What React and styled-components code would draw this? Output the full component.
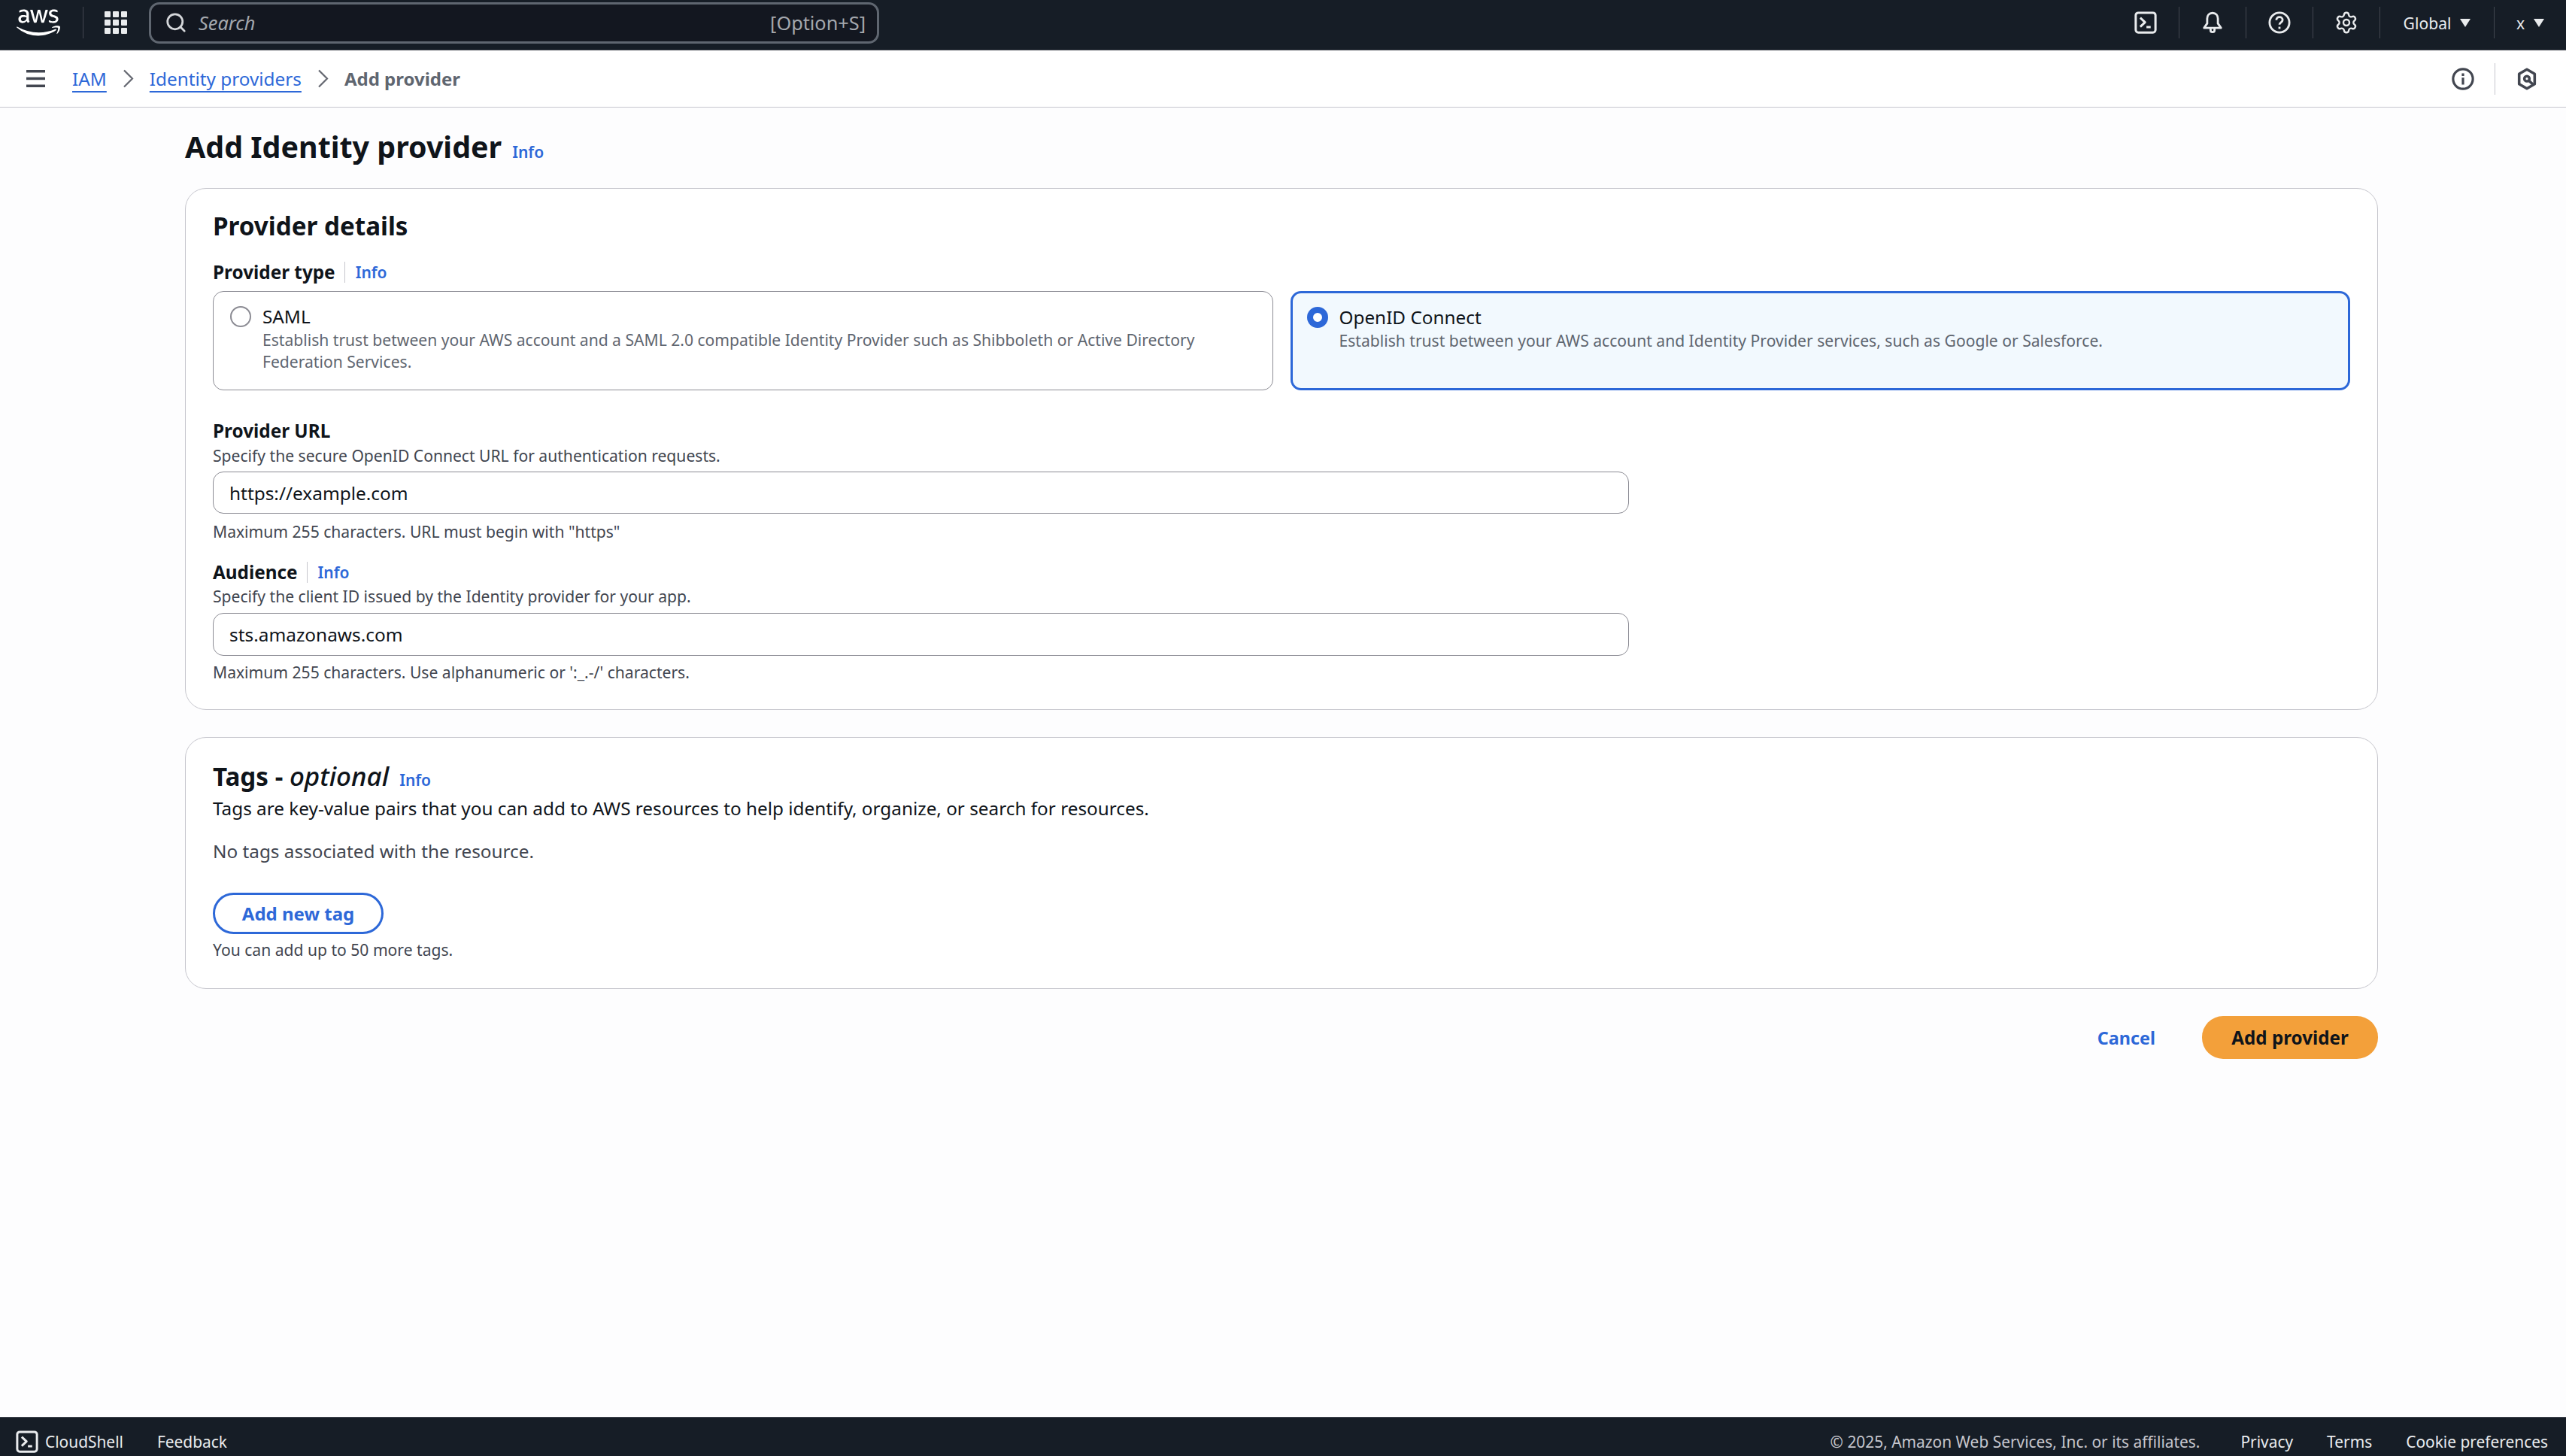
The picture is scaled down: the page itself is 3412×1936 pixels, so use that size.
import React from "react";
import styled, { createGlobalStyle } from "styled-components";
import { FaAws } from "react-icons/fa";
import { Search, Settings } from "lucide-react";

const GlobalStyle = createGlobalStyle`
  html, body { margin: 0; padding: 0; background: #fdfdfe; }
  body { font-family: "Noto Sans", "Open Sans", sans-serif; color: #0f141a; }
  * { box-sizing: border-box; }
`;

const Page = styled.div`
  height: 1936px;
  display: flex;
  flex-direction: column;
  overflow: hidden;
`;

// top bar
const TopBar = styled.header`
  height: 67px;
  flex: none;
  display: flex;
  align-items: center;
  padding-bottom: 6px;
  background: #161d26;
  border-bottom: 1px solid #424650;
  color: #fff;
`;
const Logo = styled.div`
  width: 110px;
  padding-left: 22px;
  display: flex;
  align-items: center;
  height: 100%;
`;
const VRule = styled.span`
  width: 1px;
  height: 42px;
  flex: none;
  background: ${(p) => (p.$light ? "#c6c6cd" : "#424650")};
`;
const GridBtn = styled.div`
  width: 87px;
  display: flex;
  justify-content: center;
  padding-right: 2px;
`;
const SearchBox = styled.div`
  width: 971px;
  height: 55px;
  display: flex;
  align-items: center;
  gap: 15px;
  padding: 0 15px 0 18px;
  background: #131720;
  border: 3px solid #5f6670;
  border-radius: 14px;
  font-size: 25.3px;
  color: #a4a8ae;
`;
const SearchText = styled.span`
  font-style: italic;
  flex: 1;
`;
const TopRight = styled.div`
  margin-left: auto;
  display: flex;
  align-items: center;
  height: 100%;
`;
const TopIcon = styled.div`
  width: 88px;
  display: flex;
  justify-content: center;
  color: #e9ebed;
`;
const TopMenu = styled.div`
  display: flex;
  align-items: center;
  justify-content: center;
  width: ${(p) => p.$w}px;
  gap: 12px;
  font-size: 21.1px;
  color: #e9ebed;
`;
const Caret = styled.span`
  width: 0;
  height: 0;
  border-left: 7.5px solid transparent;
  border-right: 7.5px solid transparent;
  border-top: 11px solid #e9ebed;
`;

// breadcrumbs
const CrumbBar = styled.nav`
  height: 76px;
  flex: none;
  display: flex;
  align-items: center;
  background: #fff;
  border-bottom: 1px solid #c6c6cd;
  padding: 0 10px 0 35px;
  font-size: 24.3px;
`;
const Crumbs = styled.div`
  display: flex;
  align-items: center;
  margin-left: 36px;
  gap: 21px;
`;
const CrumbLink = styled.a`
  color: #2d68d8;
  text-decoration: underline;
  text-underline-offset: 7px;
  text-decoration-thickness: 2px;
`;
const CrumbCurrent = styled.span`
  color: #5f6670;
  font-weight: 700;
  font-size: 24px;
`;
const CrumbTools = styled.div`
  margin-left: auto;
  display: flex;
  align-items: center;
  color: #424650;
`;
const ToolIcon = styled.div`
  width: 84px;
  display: flex;
  justify-content: center;
`;

// main
const Main = styled.main`
  flex: 1;
  padding: 25px 250px 0 246px;
`;
const Title = styled.h1`
  margin: 0 0 28px;
  font-size: 39.4px;
  line-height: 54px;
  font-weight: 700;
  display: flex;
  align-items: baseline;
  gap: 14px;
`;
const InfoLink = styled.a`
  color: #2d68d8;
  font-size: 21px;
  line-height: 1;
  font-weight: 600;
`;
const Card = styled.section`
  background: #fff;
  border: 1px solid #c6c6cd;
  border-radius: 28px;
  padding: ${(p) => p.$pad};
  margin-bottom: ${(p) => p.$mb || 0}px;
`;
const Heading = styled.h2`
  margin: 0;
  font-size: 33.2px;
  line-height: 44px;
  font-weight: 700;
  display: flex;
  align-items: baseline;
  gap: 14px;
  em { font-size: 35px; font-weight: 500; font-style: italic; }
`;
const Label = styled.div`
  display: flex;
  align-items: center;
  margin-top: ${(p) => p.$mt}px;
  font-size: 24.3px;
  line-height: 30px;
  font-weight: 700;
  ${InfoLink} {
    display: flex;
    align-items: center;
    height: 28px;
    border-left: 1px solid #c6c6cd;
    margin-left: 12px;
    padding-left: 14px;
  }
`;
const Small = styled.div`
  margin-top: ${(p) => p.$mt}px;
  font-size: 21.1px;
  line-height: 28px;
  color: #424650;
`;
const Tiles = styled.div`
  display: grid;
  grid-template-columns: 1fr 1fr;
  gap: 23px;
  margin-top: 10px;
`;
const Tile = styled.div`
  height: 132px;
  display: flex;
  gap: 15px;
  padding: ${(p) => (p.$on ? "17px 19px" : "18px 22px")};
  border-radius: 14px;
  border: ${(p) => (p.$on ? "3px solid #2d68d8" : "1px solid #8c8c94")};
  background: ${(p) => (p.$on ? "#f2f9fe" : "#fff")};
`;
const Radio = styled.span`
  width: 28px;
  height: 28px;
  flex: none;
  border-radius: 50%;
  background: #fff;
  border: ${(p) => (p.$on ? "8px solid #2d68d8" : "2px solid #8c8c94")};
  margin-top: 1px;
`;
const TileTitle = styled.div`
  font-size: 24.3px;
  line-height: 30px;
`;
const TileDesc = styled.div`
  font-size: 21.1px;
  line-height: 28.5px;
  color: #5f6670;
  margin-top: 2px;
`;
const Input = styled.div`
  width: 1883px;
  height: ${(p) => p.$h}px;
  margin-top: ${(p) => p.$mt}px;
  display: flex;
  align-items: center;
  padding-left: 21px;
  font-size: 24.4px;
  background: #fff;
  border: 1px solid #8c8c94;
  border-radius: 14px;
`;
const Body = styled.div`
  margin-top: ${(p) => p.$mt}px;
  font-size: 24.3px;
  line-height: 32px;
  color: ${(p) => p.$color || "#0f141a"};
`;
const OutlineBtn = styled.button`
  display: block;
  width: 227px;
  height: 55px;
  margin-top: 39px;
  padding: 0;
  background: #fff;
  border: 3px solid #2d68d8;
  border-radius: 28px;
  color: #2d68d8;
  font: 700 24px "Noto Sans", sans-serif;
`;
const Actions = styled.div`
  display: flex;
  justify-content: flex-end;
  align-items: center;
  gap: 62px;
  margin-top: 36px;
`;
const TextBtn = styled.a`
  color: #2d68d8;
  font-size: 23.4px;
  font-weight: 700;
`;
const PrimaryBtn = styled.button`
  width: 234px;
  height: 57px;
  border: 0;
  border-radius: 28px;
  background: #f3a03a;
  color: #0f141a;
  font: 700 24.2px "Noto Sans", sans-serif;
`;

// footer
const Footer = styled.footer`
  height: 52px;
  flex: none;
  display: flex;
  align-items: center;
  padding: 12px 24px 0 21px;
  background: #161d26;
  border-top: 1px solid #424650;
  color: #e9ebed;
  font-size: 20.9px;
`;
const FootShell = styled.div`
  display: flex;
  align-items: center;
  gap: 9px;
  margin-right: 45px;
`;
const FootRight = styled.div`
  margin-left: auto;
  display: flex;
  gap: 45px;
`;
const Copy = styled.span`
  color: #c6c6cd;
  margin-right: 9px;
`;

const TerminalIcon = ({ size = 30 }) => (
  <svg width={size} height={size} viewBox="0 0 16 16" fill="none" stroke="currentColor" strokeWidth="1.6">
    <rect x="1" y="1" width="14" height="14" rx="1.8" />
    <path d="M4.2 4.6 7.6 7.8 4.2 11" strokeLinejoin="round" />
    <path d="M8.6 11.2h3" />
  </svg>
);

const GridIcon = () => (
  <svg width="30" height="30" viewBox="0 0 30 30" fill="#e9ebed">
    {[0, 11, 22].map((y) =>
      [0, 11, 22].map((x) => <rect key={`${x}-${y}`} x={x} y={y} width="8" height="8" rx="1" />)
    )}
  </svg>
);

const BellIcon = () => (
  <svg width="30" height="30" viewBox="0 0 16 16" fill="none" stroke="currentColor" strokeWidth="1.5" strokeLinejoin="round">
    <path d="M8 1.2c2.4 0 3.8 1.8 3.8 4v3.4l2.2 3.2H2l2.2-3.2V5.2C4.2 3 5.600 1.200 8 1.200Z" />
    <path d="M6.600 12v1.400c0 .8.600 1.300 1.400 1.300s1.400-.5 1.400-1.300V12" />
  </svg>
);

const HelpIcon = () => (
  <svg width="30" height="30" viewBox="0 0 16 16" fill="none" stroke="currentColor" strokeWidth="1.5">
    <circle cx="8" cy="8" r="7" />
    <path d="M5.800 6.200c0-1.300 1-2.100 2.200-2.100s2.200.8 2.200 2c0 1.900-2.200 1.700-2.200 3.400" />
    <path d="M8 11v1.500" />
  </svg>
);

const InfoIcon = () => (
  <svg width="30" height="30" viewBox="0 0 16 16" fill="none" stroke="currentColor" strokeWidth="1.7">
    <circle cx="8" cy="8" r="7" />
    <path d="M8 7v5M8 4v1.800" />
  </svg>
);

const HexIcon = () => (
  <svg width="30" height="30" viewBox="0 0 16 16" fill="none" stroke="currentColor" strokeWidth="1.9" strokeLinejoin="round">
    <path d="M8 1.200 13.500 4.400v7.200L8 14.800 2.500 11.600V4.400Z" />
    <circle cx="8" cy="7.800" r="1.800" />
    <path d="M9.300 9.100 12.500 12" />
  </svg>
);

const BurgerIcon = () => (
  <svg width="25" height="23" viewBox="0 0 25 23" fill="#424650">
    <rect y="0" width="25" height="3.500" />
    <rect y="9.700" width="25" height="3.500" />
    <rect y="19.500" width="25" height="3.500" />
  </svg>
);

const CrumbChevron = () => (
  <svg width="15" height="25" viewBox="0 0 15 25" fill="none" stroke="#656871" strokeWidth="2.200">
    <path d="M2 1.500 13 12.500 2 23.500" />
  </svg>
);

export default function App() {
  return (
    <Page>
      <GlobalStyle />
      <TopBar>
        <Logo>
          <FaAws size={58} color="#fff" />
        </Logo>
        <VRule />
        <GridBtn>
          <GridIcon />
        </GridBtn>
        <SearchBox>
          <Search size={30} strokeWidth={2.2} color="#d5d7da" />
          <SearchText>Search</SearchText>
          <span>[Option+S]</span>
        </SearchBox>
        <TopRight>
          <TopIcon>
            <TerminalIcon />
          </TopIcon>
          <VRule />
          <TopIcon>
            <BellIcon />
          </TopIcon>
          <VRule />
          <TopIcon>
            <HelpIcon />
          </TopIcon>
          <VRule />
          <TopIcon>
            <Settings size={32} strokeWidth={1.8} />
          </TopIcon>
          <VRule />
          <TopMenu $w={151}>
            Global <Caret />
          </TopMenu>
          <VRule />
          <TopMenu $w={95}>
            x <Caret />
          </TopMenu>
        </TopRight>
      </TopBar>

      <CrumbBar>
        <BurgerIcon />
        <Crumbs>
          <CrumbLink>IAM</CrumbLink>
          <CrumbChevron />
          <CrumbLink>Identity providers</CrumbLink>
          <CrumbChevron />
          <CrumbCurrent>Add provider</CrumbCurrent>
        </Crumbs>
        <CrumbTools>
          <ToolIcon>
            <InfoIcon />
          </ToolIcon>
          <VRule $light />
          <ToolIcon>
            <HexIcon />
          </ToolIcon>
        </CrumbTools>
      </CrumbBar>

      <Main>
        <Title>
          Add Identity provider <InfoLink>Info</InfoLink>
        </Title>

        <Card $pad="28px 36px 35px" $mb={36}>
          <Heading>Provider details</Heading>
          <Label $mt={24}>
            Provider type <InfoLink>Info</InfoLink>
          </Label>
          <Tiles>
            <Tile>
              <Radio />
              <div>
                <TileTitle>SAML</TileTitle>
                <TileDesc>
                  Establish trust between your AWS account and a SAML 2.0 compatible Identity Provider such as Shibboleth or Active Directory
                  Federation Services.
                </TileDesc>
              </div>
            </Tile>
            <Tile $on>
              <Radio $on />
              <div>
                <TileTitle>OpenID Connect</TileTitle>
                <TileDesc>Establish trust between your AWS account and Identity Provider services, such as Google or Salesforce.</TileDesc>
              </div>
            </Tile>
          </Tiles>

          <Label $mt={39}>Provider URL</Label>
          <Small $mt={4}>Specify the secure OpenID Connect URL for authentication requests.</Small>
          <Input $mt={7} $h={56}>https://example.com</Input>
          <Small $mt={10}>Maximum 255 characters. URL must begin with "https"</Small>

          <Label $mt={25}>
            Audience <InfoLink>Info</InfoLink>
          </Label>
          <Small $mt={3}>Specify the client ID issued by the Identity provider for your app.</Small>
          <Input $mt={8} $h={57}>sts.amazonaws.com</Input>
          <Small $mt={8}>Maximum 255 characters. Use alphanumeric or ':_.-/' characters.</Small>
        </Card>

        <Card $pad="29px 36px 37px">
          <Heading>
            <span>
              Tags - <em>optional</em>
            </span>
            <InfoLink>Info</InfoLink>
          </Heading>
          <Body $mt={4}>Tags are key-value pairs that you can add to AWS resources to help identify, organize, or search for resources.</Body>
          <Body $mt={25} $color="#424650">No tags associated with the resource.</Body>
          <OutlineBtn>Add new tag</OutlineBtn>
          <Small $mt={7}>You can add up to 50 more tags.</Small>
        </Card>

        <Actions>
          <TextBtn>Cancel</TextBtn>
          <PrimaryBtn>Add provider</PrimaryBtn>
        </Actions>
      </Main>

      <Footer>
        <FootShell>
          <TerminalIcon />
          CloudShell
        </FootShell>
        <span>Feedback</span>
        <FootRight>
          <Copy>© 2025, Amazon Web Services, Inc. or its affiliates.</Copy>
          <span>Privacy</span>
          <span>Terms</span>
          <span>Cookie preferences</span>
        </FootRight>
      </Footer>
    </Page>
  );
}
